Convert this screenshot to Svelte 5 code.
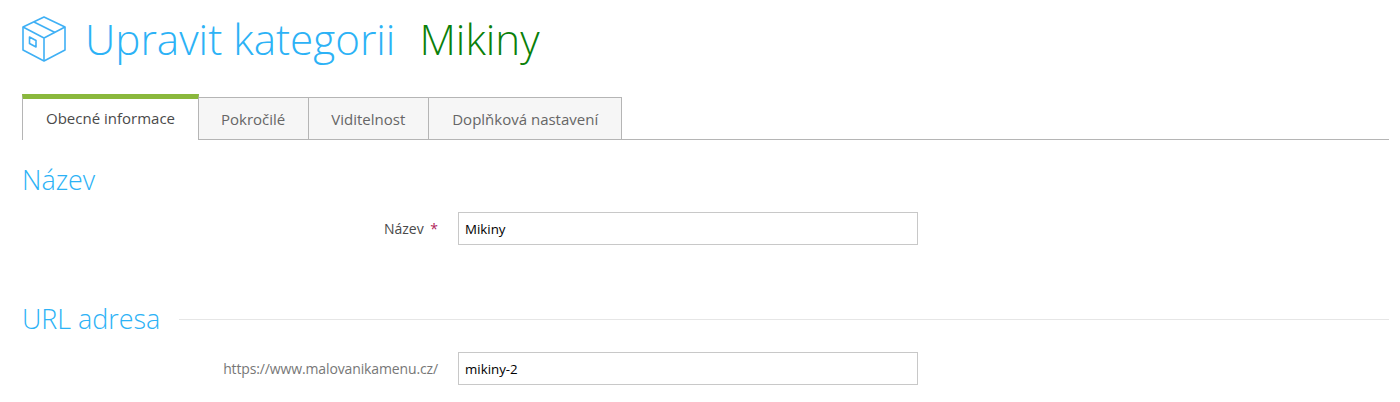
<script>
  const tabs = ["Obecné informace", "Pokročilé", "Viditelnost", "Doplňková nastavení"];
  let name = "Mikiny";
  let slug = "mikiny-2";
</script>

<div class="page">
  <header class="title">
    <svg class="box" width="44" height="46" viewBox="0 0 44 46" fill="none" stroke="#3fb0f5" stroke-width="1.6" stroke-linejoin="round">
      <path d="M22 1 L43 11 V34 L22 45 L1 34 V11 Z" />
      <path d="M1 11 L22 22 L43 11 M22 22 V45" />
      <path d="M12 6 L33 16.500" />
      <path d="M7.500 21 L14 24.500 V31 L7.500 27.500 Z" />
    </svg>
    <h1>Upravit kategorii</h1>
    <span class="item-name">Mikiny</span>
  </header>

  <nav class="tabs">
    {#each tabs as tab, i}
      <div class="tab" class:active={i === 0}>{tab}</div>
    {/each}
  </nav>

  <h2 class="section first">Název</h2>
  <div class="row">
    <label for="name">Název <span class="req">*</span></label>
    <input id="name" type="text" bind:value={name} />
  </div>

  <h2 class="section second"><span>URL adresa</span><i></i></h2>
  <div class="row url">
    <label class="muted" for="slug">https://www.malovanikamenu.cz/</label>
    <input id="slug" type="text" bind:value={slug} />
  </div>
</div>

<style>
  :global(body) {
    background: #fff;
    font-family: "Open Sans", "Liberation Sans", sans-serif;
    overflow: hidden;
  }

  .page {
    height: 402px;
    padding: 0 11px 0 22px;
    box-sizing: border-box;
    overflow: hidden;
  }

  .title {
    display: flex;
    align-items: center;
    height: 77px;
  }

  .box {
    flex: none;
    margin-right: 19px;
  }

  h1 {
    margin: 0;
    font-size: 42.2px;
    font-weight: 300;
    color: #2cb2f6;
  }

  .item-name {
    margin-left: 24px;
    font-size: 42.2px;
    font-weight: 300;
    color: #0a800a;
  }

  .tabs {
    display: flex;
    align-items: flex-end;
    margin-top: 16px;
    height: 46px;
    border-bottom: 1px solid #b5b5b5;
  }

  .tab {
    height: 41px;
    line-height: 42px;
    padding: 0 23px 0 22px;
    font-size: 15px;
    color: #666;
    background: #f6f6f6;
    border: 1px solid #b5b5b5;
    border-left: 0;
    border-bottom: 0;
  }

  .tab:last-child {
    padding-left: 23px;
  }

  .tab.active {
    position: relative;
    top: 1px;
    height: 41px;
    line-height: 39px;
    padding: 0 23px;
    color: #4a4a4a;
    background: #fff;
    border-top: 5px solid #8ab83c;
    border-left: 1px solid #b5b5b5;
  }

  .section {
    margin: 0;
    font-size: 26.9px;
    font-weight: 300;
    line-height: 32px;
    color: #2cb2f6;
  }

  .section.first {
    margin-top: 24px;
  }

  .section.second {
    display: flex;
    align-items: center;
    margin-top: 58px;
  }

  .section.second i {
    flex: 1;
    height: 1px;
    margin-left: 19px;
    margin-top: 1px;
    background: #e6e6e6;
  }

  .row {
    display: flex;
    align-items: center;
    margin-top: 16px;
  }

  .row.url {
    margin-top: 17px;
  }

  label {
    flex: none;
    width: 416px;
    font-size: 14px;
    text-align: right;
    color: #4a4a4a;
  }

  label.muted {
    color: #777;
    letter-spacing: -0.13px;
  }

  .req {
    margin-left: 3px;
    color: #b0245a;
  }

  input {
    width: 460px;
    height: 33px;
    margin-left: 20px;
    padding: 0 6px;
    box-sizing: border-box;
    border: 1px solid #c8c8c8;
    border-radius: 0;
    outline: none;
    font-family: inherit;
    font-size: 13.3px;
    color: #000;
  }
</style>
